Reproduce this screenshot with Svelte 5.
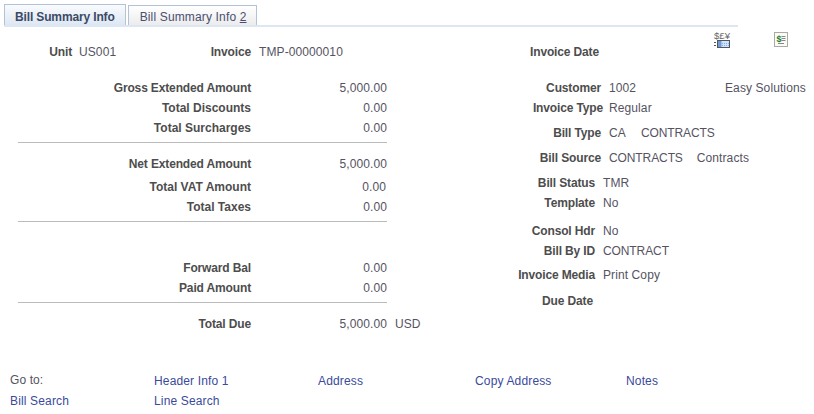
<script>
  const topLeft = [
    { label: "Unit", value: "US001", cls: "unit" },
    { label: "Invoice", value: "TMP-00000010", cls: "invoice" },
  ];

  // gap = space above the row, in px
  const amounts = [
    { label: "Gross Extended Amount", value: "5,000.00", gap: 22 },
    { label: "Total Discounts", value: "0.00", gap: 6, wide: true },
    { label: "Total Surcharges", value: "0.00", gap: 6, rule: true, wide: true },
    { label: "Net Extended Amount", value: "5,000.00", gap: 14 },
    { label: "Total VAT Amount", value: "0.00", gap: 9, inset: true, wide: true },
    { label: "Total Taxes", value: "0.00", gap: 6, rule: true, wide: true },
    { label: "Forward Bal", value: "0.00", gap: 39 },
    { label: "Paid Amount", value: "0.00", gap: 6, rule: true },
    { label: "Total Due", value: "5,000.00", suffix: "USD", gap: 14 },
  ];

  const details = [
    { label: "Customer", w: 77, m: 8, values: ["1002"], extra: "Easy Solutions", gap: 22 },
    { label: "Invoice Type", w: 79, m: 6, values: ["Regular"], gap: 6 },
    { label: "Bill Type", w: 77, m: 8, values: ["CA", "CONTRACTS"], gap: 11, spread: 15 },
    { label: "Bill Source", w: 77, m: 8, values: ["CONTRACTS", "Contracts"], gap: 11 },
    { label: "Bill Status", w: 71, m: 8, values: ["TMR"], gap: 11 },
    { label: "Template", w: 71, m: 8, values: ["No"], gap: 6 },
    { label: "Consol Hdr", w: 71, m: 8, values: ["No"], gap: 14 },
    { label: "Bill By ID", w: 71, m: 8, values: ["CONTRACT"], gap: 6 },
    { label: "Invoice Media", w: 71, m: 8, values: ["Print Copy"], gap: 10 },
    { label: "Due Date", w: 69, m: 8, values: [], gap: 12 },
  ];

  const links = [
    ["Header Info 1", "Line Search"],
    ["Address"],
    ["Copy Address"],
    ["Notes"],
  ];

  const isUpper = (v) => /^[A-Z]{4,}$/.test(v);
</script>

<div class="page">
  <div class="tabs">
    <a class="tab active" href="#summary">Bill Summary Info</a>
    <a class="tab" href="#summary2">Bill Summary Info <u>2</u></a>
  </div>

  <div class="body">
    <div class="left">
      <div class="top-row">
        {#each topLeft as item}
          <span class="top-label {item.cls}">{item.label}</span>
          <span class="val top-val">{item.value}</span>
        {/each}
      </div>
      {#each amounts as row}
        <div class="amount" style="margin-top: {row.gap}px">
          <span class="label" class:wide={row.wide}>{row.label}</span>
          <span class="num" class:inset={row.inset}>{row.value}</span>
          {#if row.suffix}<span class="val suffix">{row.suffix}</span>{/if}
        </div>
        {#if row.rule}<div class="rule"></div>{/if}
      {/each}
    </div>

    <div class="right">
      <div class="right-top">
        <span class="label">Invoice Date</span>
        <div class="icons">
          <svg class="icon" width="16" height="16" viewBox="0 0 16 16">
            <text class="cur" x="0" y="6.500" textLength="16" lengthAdjust="spacingAndGlyphs">$£¥</text>
            <path d="M0 10.500h2M0 13.500h2" stroke="#555" />
            <rect x="3.500" y="8.500" width="12" height="7" fill="#cfe2fb" stroke="#555" />
            <rect x="4" y="9" width="3.500" height="6" fill="#6d9bd6" />
            <path d="M8 11.500h7M8 13.500h7" stroke="#7fb0ee" stroke-dasharray="1 1" />
          </svg>
          <svg class="icon" width="14" height="15" viewBox="0 0 14 15">
            <rect x="0.500" y="0.500" width="13" height="14" fill="#fbfbf4" stroke="#555" stroke-dasharray="1 1" />
            <text class="dollar" x="2.500" y="9.500">$</text>
            <path d="M7.500 4.500h4M7.500 6.500h4M7.500 8.500h4M4 11.500h6" stroke="#888" />
          </svg>
        </div>
      </div>
      {#each details as row}
        <div class="detail" style="margin-top: {row.gap}px">
          <span class="label fixed" style="width: {row.w}px; margin-right: {row.m}px">{row.label}</span>
          <div class="values" style="gap: {row.spread ?? 14}px">
            {#each row.values as v}<span class="val" class:upper={isUpper(v)}>{v}</span>{/each}
          </div>
          {#if row.extra}<span class="val">{row.extra}</span>{/if}
        </div>
      {/each}
    </div>
  </div>

  <div class="goto">
    <div class="goto-col first">
      <span class="goto-label">Go to:</span>
      <a href="#search">Bill Search</a>
    </div>
    {#each links as col, i}
      <div class="goto-col c{i}">
        {#each col as link}<a href="#{link}">{link}</a>{/each}
      </div>
    {/each}
  </div>
</div>

<style>
  :global(body) {
    margin: 0;
    background: #fff;
  }
  .page {
    width: 814px;
    height: 414px;
    overflow: hidden;
    font-family: "Liberation Sans", Arial, sans-serif;
    font-size: 12px;
    line-height: 14px;
    color: #55535f;
    letter-spacing: 0.1px;
  }
  .tabs {
    display: flex;
    gap: 2px;
    margin: 5px 76px 0 4px;
    height: 20px;
    border-bottom: 2px solid #dde7f3;
  }
  .tab {
    box-sizing: border-box;
    height: 20px;
    padding: 4px 9px 0 11px;
    border: 1px solid #b3c3d6;
    border-bottom: 0;
    background: linear-gradient(#fff, #ececec);
    color: #4a4f70;
    text-decoration: none;
  }
  .tab.active {
    height: 21px;
    margin-top: -1px;
    padding: 5px 10px 0 10px;
    background: linear-gradient(#f9fbfd, #dde7f3);
    color: #3c4a66;
    font-weight: bold;
    letter-spacing: -0.14px;
  }
  .body {
    display: flex;
    height: 347px;
  }
  .left {
    width: 524px;
    flex-shrink: 0;
  }
  .top-row {
    display: flex;
    margin-top: 18px;
    height: 14px;
  }
  .top-label {
    font-weight: bold;
    text-align: right;
    color: #4d4d4d;
    letter-spacing: -0.14px;
  }
  .top-label.unit { width: 72px; }
  .top-label.invoice { width: 83px; }
  .top-val { margin-left: 7px; width: 89px; }
  .invoice + .top-val { margin-left: 8px; }
  .amount {
    display: flex;
    height: 14px;
  }
  .label {
    font-weight: bold;
    color: #4d4d4d;
    white-space: nowrap;
    letter-spacing: -0.14px;
  }
  .label.wide { letter-spacing: 0; }
  .amount .label {
    width: 251px;
    text-align: right;
  }
  .num {
    width: 136px;
    text-align: right;
  }
  .num.inset { width: 135px; }
  .val { white-space: nowrap; }
  .val.upper { letter-spacing: -0.1px; }
  .suffix { margin-left: 8px; }
  .rule {
    margin: 7px 0 0 18px;
    width: 369px;
    height: 1px;
    background: #bbb;
  }
  .right { flex: 1; }
  .right-top {
    display: flex;
    margin-top: 18px;
    height: 14px;
    margin-left: 6px;
    position: relative;
  }
  .icons {
    position: absolute;
    left: 184px;
    top: -13px;
    display: flex;
    align-items: flex-start;
    gap: 44px;
  }
  .icon { overflow: visible; }
  .cur {
    font-size: 8.500px;
    letter-spacing: 0;
    fill: #666;
  }
  .dollar {
    font-size: 9px;
    font-weight: bold;
    letter-spacing: 0;
    fill: #1a7a2a;
  }
  .detail {
    display: flex;
    height: 14px;
  }
  .fixed {
    flex-shrink: 0;
    display: flex;
    justify-content: flex-end;
  }
  .values {
    display: flex;
    width: 116px;
    flex-shrink: 0;
  }
  .goto {
    display: flex;
    margin-left: 10px;
  }
  .goto-col {
    display: flex;
    flex-direction: column;
    gap: 6px;
    white-space: nowrap;
  }
  .goto-col.first { width: 144px; }
  .goto-col.c0 { width: 164px; }
  .goto-col.c1 { width: 157px; }
  .goto-col.c2 { width: 151px; }
  .goto-label { margin-top: -1px; margin-bottom: 1px; }
  a {
    color: #3a4a9c;
    text-decoration: none;
    letter-spacing: 0.15px;
  }
</style>
